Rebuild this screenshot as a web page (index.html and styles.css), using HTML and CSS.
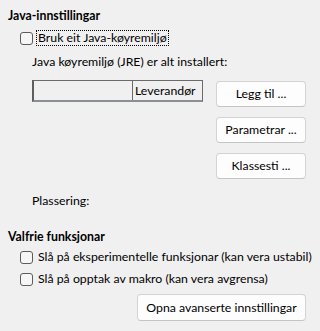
FILE: index.html
```html
<!DOCTYPE html>
<html lang="nn">
<head>
<meta charset="utf-8">
<link rel="stylesheet" href="styles.css">
</head>
<body>
<div class="page">
  <div class="title">Java-innstillingar</div>
  <div class="check-row first">
    <span class="box"></span>
    <span class="label focus">Bruk eit Java-køyremiljø</span>
  </div>
  <div class="indent info">Java køyremiljø (JRE) er alt installert:</div>
  <div class="jre-row">
    <div class="jre-table">
      <div class="cell c1"></div>
      <div class="cell c2">Leverandør</div>
    </div>
    <div class="btn-col">
      <div class="btn">Legg til ...</div>
      <div class="btn">Parametrar ...</div>
      <div class="btn">Klassesti ...</div>
    </div>
  </div>
  <div class="indent place">Plassering:</div>
  <div class="title second">Valfrie funksjonar</div>
  <div class="check-row c-a">
    <span class="box"></span>
    <span class="label">Slå på eksperimentelle funksjonar (kan vera ustabil)</span>
  </div>
  <div class="check-row c-b">
    <span class="box"></span>
    <span class="label">Slå på opptak av makro (kan vera avgrensa)</span>
  </div>
  <div class="bottom-row">
    <div class="btn wide">Opna avanserte innstillingar</div>
  </div>
</div>
</body>
</html>
```
FILE: styles.css
```css
html, body {
  margin: 0;
  padding: 0;
  background: #f0f0f0;
}
body {
  font-family: Lato, "Noto Sans", sans-serif;
  font-size: 12.3px;
  color: #000;
  width: 316px;
  height: 331px;
  overflow: hidden;
}
.page {
  padding: 8px 10px 0 8px;
}
.title {
  font-weight: bold;
  height: 16px;
  line-height: 16px;
}
.title.second {
  margin-top: 20px;
}
.check-row {
  display: flex;
  align-items: center;
  height: 16px;
  padding-left: 12px;
}
.check-row.first { margin-top: 6px; }
.check-row.c-a { margin-top: 4px; }
.check-row.c-b { margin-top: 6px; }
.box {
  width: 11px;
  height: 11px;
  border: 1px solid #5c5c5c;
  border-radius: 3px;
  background: #f6f6f6;
  margin-right: 5px;
  flex: none;
}
.label {
  line-height: 14px;
  white-space: nowrap;
}
.label.focus {
  border: 1px dotted #000;
  padding: 0 1px;
  margin-left: -2px;
}
.indent {
  padding-left: 24px;
  height: 16px;
  line-height: 16px;
}
.info { margin-top: 8px; }
.jre-row {
  display: flex;
  justify-content: space-between;
  margin-top: 10px;
  padding-left: 24px;
}
.jre-table {
  display: flex;
  width: 168px;
  height: 19px;
  border-top: 1px solid #6a6a6a;
  border-left: 2px solid #5e5e5e;
  border-right: 1px solid #6a6a6a;
  border-bottom: 2px solid #8a8e96;
}
.cell {
  height: 19px;
  line-height: 19px;
}
.c1 {
  width: 98px;
  border-right: 1px solid #6a6a6a;
}
.c2 {
  flex: 1;
  padding-left: 2px;
}
.btn-col {
  display: flex;
  flex-direction: column;
  gap: 10px;
  margin-top: 1px;
}
.btn {
  box-sizing: border-box;
  width: 90px;
  height: 26px;
  line-height: 24px;
  text-align: center;
  background: #fdfdfd;
  border: 1px solid #d3d3d3;
  border-bottom-color: #c4c4c4;
  border-radius: 4px;
  white-space: nowrap;
}
.place { margin-top: 14px; }
.bottom-row {
  display: flex;
  justify-content: flex-end;
  margin-top: 7px;
}
.btn.wide {
  width: 169px;
  height: 27px;
  line-height: 25px;
}
```
